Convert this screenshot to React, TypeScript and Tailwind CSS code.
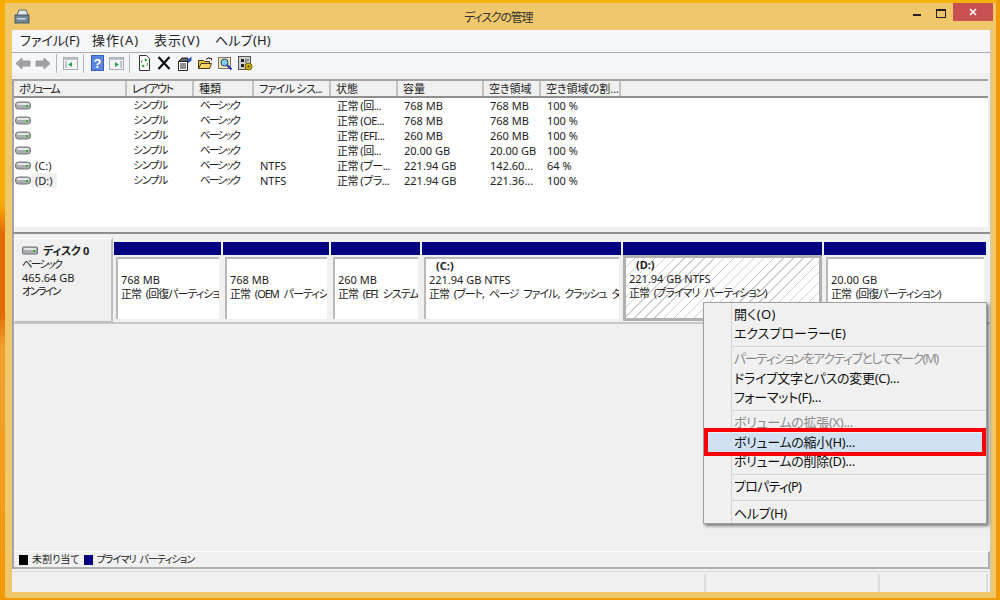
import React from 'react'

const FONT = "font-['Noto_Sans','Noto_Sans_CJK_JP',sans-serif] [font-feature-settings:'palt']"

const COLUMNS = [
  { label: 'ボリューム', w: 'w-[113px]', head: 'tracking-[-2px]' },
  { label: 'レイアウト', w: 'w-[67px]', head: 'tracking-[-1.500px]' },
  { label: '種類', w: 'w-[60px]', head: '' },
  { label: 'ファイル シス...', w: 'w-[77px]', head: 'tracking-[-0.700px]' },
  { label: '状態', w: 'w-[67px]', head: '' },
  { label: '容量', w: 'w-[86px]', head: '' },
  { label: '空き領域', w: 'w-[57px]', head: '' },
  { label: '空き領域の割...', w: 'w-[80px]', head: '' },
]

const CELL_STYLE = [
  '',
  'text-[10.500px] tracking-[-1px]',
  'text-[10.500px] tracking-[-1.800px]',
  '',
  'tracking-[-0.500px]',
  '',
  '',
  '',
]

const ROWS = [
  ['', 'シンプル', 'ベーシック', '', '正常 (回...', '768 MB', '768 MB', '100 %'],
  ['', 'シンプル', 'ベーシック', '', '正常 (OE...', '768 MB', '768 MB', '100 %'],
  ['', 'シンプル', 'ベーシック', '', '正常 (EFI...', '260 MB', '260 MB', '100 %'],
  ['', 'シンプル', 'ベーシック', '', '正常 (回...', '20.00 GB', '20.00 GB', '100 %'],
  ['(C:)', 'シンプル', 'ベーシック', 'NTFS', '正常 (ブー...', '221.94 GB', '142.60...', '64 %'],
  ['(D:)', 'シンプル', 'ベーシック', 'NTFS', '正常 (プラ...', '221.94 GB', '221.36...', '100 %'],
]

const PARTITIONS = [
  { w: 'w-[107px]', size: '768 MB', status: '正常 (回復パーティション)' },
  { w: 'w-[106px]', size: '768 MB', status: '正常 (OEM パーティション)' },
  { w: 'w-[89px]', size: '260 MB', status: '正常 (EFI システム パーティション)' },
  { w: 'w-[199px]', name: '(C:)', size: '221.94 GB NTFS', status: '正常 (ブート, ページ ファイル, クラッシュ ダンプ, プライマリ)' },
  { w: 'w-[199px]', name: '(D:)', size: '221.94 GB NTFS', status: '正常 (プライマリ パーティション)', selected: true },
  { w: 'w-[162px]', size: '20.00 GB', status: '正常 (回復パーティション)' },
]

const DriveIcon = ({ className = '', rx = 3 }: { className?: string; rx?: number }) => (
  <svg width="16" height="9" viewBox="0 0 16 9" className={`shrink-0 ${className}`}>
    <rect x="0.5" y="1" width="15" height="7" rx={rx} fill="#a9aeb0" stroke="#6f7476" />
    <rect x="2" y="2" width="12" height="2" rx="1" fill="#e4e6e7" />
    <rect x="11" y="4" width="2" height="2" fill="#35b01f" />
  </svg>
)

const Arrow = ({ flip = false, className = '' }: { flip?: boolean; className?: string }) => (
  <svg width="16" height="13" viewBox="0 0 16 13" className={`${flip ? '-scale-x-100' : ''} ${className}`}>
    <path d="M1 6.500 7 1v3h8v5H7v3z" fill="#a2a2a2" stroke="#8e8e8e" strokeWidth="0.8" />
  </svg>
)

const PaneIcon = ({ right = false, className = '' }: { right?: boolean; className?: string }) => (
  <svg width="15" height="14" viewBox="0 0 15 14" className={className}>
    <rect x="0.5" y="1.5" width="14" height="12" fill="#f4f5f6" stroke="#a7adb2" />
    <rect x="1" y="2" width="13" height="2" fill="#bcc3c8" />
    <rect x={right ? 11 : 2} y="5" width="2" height="7" fill="#b9c4cc" />
    <path d={right ? 'M6 6v5l4-2.500z' : 'M9 6v5L5 8.500z'} fill="#2fa54a" />
  </svg>
)

const ToolbarSep = ({ className = '' }: { className?: string }) => (
  <span className={`w-px h-[19px] bg-[#b5b5b5] ${className}`} />
)

const ToolbarIcons = () => (
  <>
    <Arrow className="ml-[3px]" />
    <Arrow flip className="ml-[4px]" />
    <ToolbarSep className="ml-[5px]" />
    <PaneIcon className="ml-[6px]" />
    <ToolbarSep className="ml-[5px]" />
    <svg width="13" height="16" viewBox="0 0 13 16" className="ml-[7px]">
      <rect width="13" height="16" fill="#3560bd" />
      <rect width="11" height="14" x="1" y="1" fill="#5b86de" />
      <text x="6.500" y="13" textAnchor="middle" fontSize="13" fontWeight="700" fill="#fff" fontFamily="Liberation Sans">?</text>
    </svg>
    <PaneIcon right className="ml-[5px]" />
    <ToolbarSep className="ml-[5px]" />
    <svg width="13" height="16" viewBox="0 0 13 16" className="ml-[8px]">
      <path d="M1.500.5h7l3 3v12h-10z" fill="#fff" stroke="#333" />
      <path d="M6.500 3.500a3.500 3.500 0 0 1 3 2l-2.500 1zM6.500 12.500a3.500 3.500 0 0 1-3-2l2.500-1z" fill="#2ba02b" />
      <path d="M3.500 8a3 3 0 0 1 1-3M9.500 8a3 3 0 0 1-1 3" stroke="#2ba02b" fill="none" />
    </svg>
    <svg width="14" height="14" viewBox="0 0 14 14" className="ml-[6px]">
      <path d="M1.500 1 12.500 13M12.500 1 1.500 13" stroke="#111" strokeWidth="2.200" />
    </svg>
    <svg width="15" height="15" viewBox="0 0 15 15" className="ml-[6px]">
      <path d="M1.500 5.500h9v9h-9z" fill="#fff" stroke="#222" />
      <path d="M3 8h6M3 10h6M3 12h6" stroke="#222" />
      <path d="M1.500 5.500 5 2h6l-.5 3.500z" fill="#666" stroke="#222" />
      <path d="M10.500 4 14.500.5v4l-4 3z" fill="#2a4fb0" />
    </svg>
    <svg width="14" height="12" viewBox="0 0 14 12" className="ml-[6px]">
      <path d="M.5 3.500h5l1 1h5v7H.5z" fill="#e8c04a" stroke="#4a3a10" />
      <path d="M3 6.500h10.500l-2 5H.5z" fill="#f4d76a" stroke="#4a3a10" />
      <path d="M8 2.500 11 .5v1h2.500v2" stroke="#222" fill="none" />
    </svg>
    <svg width="15" height="15" viewBox="0 0 15 15" className="ml-[6px]">
      <rect x="0.500" y="1.500" width="12" height="11" fill="#f2e6a8" stroke="#777" />
      <circle cx="6.500" cy="6.500" r="3.500" fill="#7fd0e8" stroke="#23407a" />
      <path d="M9 9l4.500 4.500" stroke="#2233aa" strokeWidth="2" />
    </svg>
    <svg width="15" height="15" viewBox="0 0 15 15" className="ml-[5px]">
      <rect x="0.500" y="0.500" width="12" height="13" fill="#cfcfcf" stroke="#555" />
      <path d="M3 3h3v3H3zM3 8h3v3H3z" fill="#222" />
      <path d="M7 4h4M7 6h2" stroke="#444" />
      <circle cx="10.500" cy="10.500" r="3.500" fill="#d8b400" stroke="#6c5c00" />
      <circle cx="10.500" cy="10.500" r="1.200" fill="#555" />
    </svg>
  </>
)

function Partition({ p }: { p: (typeof PARTITIONS)[number] }) {
  return (
    <div className={`${p.w} h-full flex flex-col shrink-0`}>
      <div className="h-[13px] bg-[#000080] shrink-0" />
      <div className={`flex-1 min-h-0 ${p.selected ? 'border-[3px] border-[#b0b0b0] bg-[repeating-linear-gradient(135deg,#ffffff_0,#ffffff_6px,#cfcfcf_6px,#cfcfcf_7px)]' : 'p-[2px] bg-[#f0f0f0]'}`}>
        <div className={`h-full flex flex-col justify-end pb-[18px] pl-[3px] overflow-hidden whitespace-nowrap text-[11px] leading-[14px] text-[#222] ${p.selected ? '' : 'bg-white border-t-2 border-l-2 border-[#b9b9b9]'}`}>
          {p.name && <span className="font-bold pl-[7px]">{p.name}</span>}
          <span>{p.size}</span>
          <span className="tracking-[-1px] [word-spacing:3px]">{p.status}</span>
        </div>
      </div>
    </div>
  )
}

function MenuItem({ label, disabled, active, fit = 'tracking-[-0.300px]' }: { label: string; disabled?: boolean; active?: boolean; fit?: string }) {
  return (
    <div className={`relative h-[19.500px] pl-[30px] flex items-center text-[13px] ${fit} ${disabled ? 'text-[#8c8c8c]' : 'text-[#111]'} ${active ? 'bg-[#d0e1f1]' : ''}`}>
      {label}
      {active && <span className="absolute left-0 right-0 -top-[5px] -bottom-[4px] border-[4px] border-[#fb0007]" />}
    </div>
  )
}

const MenuSep = ({ tall = false }: { tall?: boolean }) => (
  <div className={`${tall ? 'h-[7px]' : 'h-[5.500px]'} flex items-center pl-[27px]`}>
    <div className="h-px w-full bg-[#d4d4d4]" />
  </div>
)

export default function App() {
  return (
    <div className={`${FONT} relative w-[1000px] h-[600px] overflow-hidden flex bg-[#ef9a06] text-[#222]`}>
      <div className="w-[5px] shrink-0 bg-[linear-gradient(180deg,#f6ab04_0,#f6ab04_34%,#e2690a_39%,#e2690a_52%,#f0a030_58%,#f29a08_100%)]" />
      <div className="flex-1 flex flex-col min-w-0 pb-[2px]">
        <div className="h-[3px] bg-[#f4b20a] shrink-0" />
        <div className="flex-1 flex flex-col bg-[#f0c76a] min-h-0">
          {/* Title bar */}
          <div className="h-[27px] shrink-0 flex items-start relative">
            <svg width="16" height="15" viewBox="0 0 16 15" className="ml-[9px] mt-[6px]">
              <rect x="1" y="6" width="14" height="8" fill="#6f8794" stroke="#4b5b66" />
              <path d="M3 6 5 1h7l2 5z" fill="#dfe5e8" stroke="#54646e" />
              <rect x="3" y="9" width="9" height="1.500" fill="#cfd8dc" />
            </svg>
            <span className="absolute left-[459px] top-[7px] text-[12px] leading-[15px] tracking-[-1.200px] text-[#333]">ディスクの管理</span>
            <div className="ml-auto mr-[3px] flex items-start">
              <span className="w-[8px] h-[2px] bg-[#222] mt-[11px] mr-[15px]" />
              <span className="w-[8px] h-[6px] border border-t-2 border-[#222] mt-[6px] mr-[6px] box-content" />
              <div className="w-[40px] h-[18px] bg-[#c75050] flex items-center justify-center ml-[1px]">
                <svg width="8" height="8" viewBox="0 0 8 8"><path d="M1 1l6 6M7 1 1 7" stroke="#fff" strokeWidth="1.600" /></svg>
              </div>
            </div>
          </div>

          <div className="flex flex-1 min-h-0">
            <div className="w-[7px] shrink-0" />
            {/* Client area */}
            <div className="w-[979px] flex flex-col bg-[#f0f0f0] border-r border-[#c8c8c8] min-h-0">
              <div className="h-[22px] shrink-0 bg-[#f5f6f9] flex items-center pl-[8px] text-[13px] border-b border-[#ababab] box-content">
                <span className="w-[72px]">ファイル(F)</span>
                <span className="w-[62px] tracking-[1px]">操作(A)</span>
                <span className="w-[61px] tracking-[1px]">表示(V)</span>
                <span className="tracking-[0.2px]">ヘルプ(H)</span>
              </div>
              <div className="h-[20px] shrink-0 bg-[#f5f6f9] flex items-center">
                <ToolbarIcons />
              </div>
              <div className="h-[6px] shrink-0" />

              {/* Volume list */}
              <div className="h-[148px] shrink-0 mr-[2px] bg-white border-t-2 border-l-2 border-[#a4a4a4] overflow-hidden text-[11px]">
                <div className="h-[15px] flex bg-[#f0f0f0] border-b-2 border-[#8f8f8f] box-content">
                  {COLUMNS.map((c) => (
                    <div key={c.label} className={`${c.w} ${c.head} shrink-0 pl-[5px] border-r-2 border-[#c2c2c2] leading-[15px] whitespace-nowrap overflow-hidden`}>
                      {c.label}
                    </div>
                  ))}
                </div>
                {ROWS.map((row, i) => (
                  <div key={i} className="h-[15px] flex items-center leading-[15px]">
                    {row.map((cell, j) => (
                      <div key={j} className={`${COLUMNS[j].w} ${CELL_STYLE[j]} shrink-0 pl-[6px] whitespace-nowrap flex items-center`}>
                        {j === 0 && <DriveIcon className="-ml-[5px] mr-[4px]" />}
                        {j === 0 && cell ? (
                          <span className={i === 5 ? 'bg-[#f0f0f0] px-[4px] -ml-[4px]' : ''}>{cell}</span>
                        ) : (
                          j !== 0 && cell
                        )}
                      </div>
                    ))}
                  </div>
                ))}
              </div>
              <div className="h-[5px] shrink-0 border-b-2 border-[#8f8f8f] border-l-2 border-l-[#a4a4a4] box-content" />

              {/* Disk area */}
              <div className="flex-1 min-h-0 flex flex-col border-l-2 border-[#a4a4a4]">
                <div className="h-[84px] shrink-0 flex pt-[4px] border-b-2 border-[#c8c8c8] box-content">
                  <div className="w-[99px] h-[85px] shrink-0 bg-[#f0f0f0] border-t border-l border-white border-r-2 border-b-2 border-r-[#c0c0c0] border-b-[#c0c0c0] pl-[7px] pt-[5px] text-[11px] leading-[13.500px]">
                    <div className="flex items-center gap-[5px] font-bold">
                      <DriveIcon rx={1} />
                      <span className="tracking-[-0.300px]">ディスク 0</span>
                    </div>
                    <div className="text-[10.500px] tracking-[-1.800px]">ベーシック</div>
                    <div>465.64 GB</div>
                    <div className="text-[10.500px] tracking-[-1.800px]">オンライン</div>
                  </div>
                  <div className="flex gap-[2px] ml-[1px] h-[79px] mt-[4px] w-[872px]">
                    {PARTITIONS.map((p) => (
                      <Partition key={p.size + p.status} p={p} />
                    ))}
                  </div>
                </div>
                <div className="flex-1" />
                <div className="h-[15px] shrink-0 flex items-center gap-[4px] pl-[5px] text-[10px] border-t border-white border-b-2 border-b-[#b0b0b0] border-r-2 border-r-[#b0b0b0] box-content">
                  <span className="w-[9px] h-[10px] bg-black" />
                  <span>未割り当て</span>
                  <span className="w-[9px] h-[10px] bg-[#000080]" />
                  <span className="tracking-[-0.900px] [word-spacing:2px]">プライマリ パーティション</span>
                </div>
              </div>

              {/* Status bar */}
              <div className="h-[21px] shrink-0 mt-[2px] border-t border-[#dcdcdc] flex justify-end pr-[2px]">
                <div className="w-[174px] border-l-2 border-[#dcdcdc] mt-[2px]" />
                <div className="w-[110px] border-l-2 border-r-2 border-[#dcdcdc] mt-[2px]" />
              </div>
            </div>
            <div className="flex-1" />
          </div>
          <div className="h-[6px] shrink-0" />
        </div>
      </div>
      <div className="w-[4px] shrink-0" />

      {/* Context menu */}
      <div className="absolute left-[703px] top-[302px] w-[284px] h-[222px] bg-[#f0f0f0] border border-[#a0a0a0] shadow-[2px_2px_3px_rgba(0,0,0,0.5)] pt-[1.500px]">
        <div className="absolute left-[27px] top-0 bottom-0 w-px bg-[#d4d4d4]" />
        <MenuItem label="開く(O)" fit="tracking-[0.400px]" />
        <MenuItem label="エクスプローラー(E)" fit="" />
        <MenuSep />
        <MenuItem label="パーティションをアクティブとしてマーク(M)" disabled fit="tracking-[-1.500px]" />
        <MenuItem label="ドライブ文字とパスの変更(C)..." />
        <MenuItem label="フォーマット(F)..." />
        <MenuSep />
        <MenuItem label="ボリュームの拡張(X)..." disabled />
        <MenuItem label="ボリュームの縮小(H)..." active />
        <MenuItem label="ボリュームの削除(D)..." />
        <MenuSep />
        <MenuItem label="プロパティ(P)" fit="tracking-[-0.800px]" />
        <MenuSep tall />
        <MenuItem label="ヘルプ(H)" />
      </div>
    </div>
  )
}
